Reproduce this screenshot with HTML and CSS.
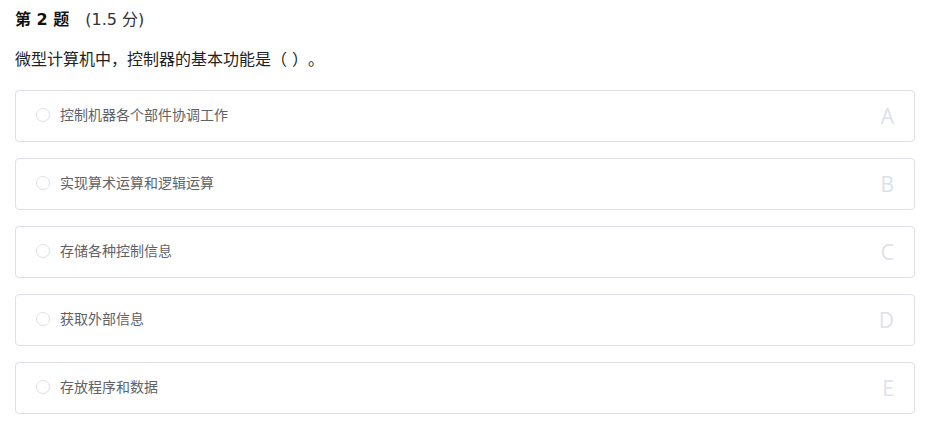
FILE: index.html
```html
<!DOCTYPE html>
<html lang="zh-CN">
<head>
<meta charset="utf-8">
<link rel="stylesheet" href="styles.css">
</head>
<body>
<div class="question">
  <div class="q-title"><span class="q-no">第 2 题</span><span class="q-score">(1.5 分)</span></div>
  <div class="q-text">微型计算机中，控制器的基本功能是（ ）。</div>
  <div class="options">
    <div class="option"><span class="radio"></span><span class="opt-text">控制机器各个部件协调工作</span><span class="letter">A</span></div>
    <div class="option"><span class="radio"></span><span class="opt-text">实现算术运算和逻辑运算</span><span class="letter">B</span></div>
    <div class="option"><span class="radio"></span><span class="opt-text">存储各种控制信息</span><span class="letter">C</span></div>
    <div class="option"><span class="radio"></span><span class="opt-text">获取外部信息</span><span class="letter">D</span></div>
    <div class="option"><span class="radio"></span><span class="opt-text">存放程序和数据</span><span class="letter">E</span></div>
  </div>
</div>
</body>
</html>
```
FILE: styles.css
```css
html, body {
  margin: 0;
  padding: 0;
  background: #fff;
}
body {
  font-family: "DejaVu Sans", "Noto Sans CJK SC", sans-serif;
  color: #1a1a1a;
  text-spacing-trim: space-all;
}
.question {
  padding: 8px 17px 0 15px;
}
.q-title {
  display: flex;
  align-items: baseline;
  gap: 16px;
  font-size: 16px;
  line-height: 24px;
}
.q-no {
  font-weight: bold;
  color: #111;
}
.q-score {
  font-size: 16px;
  color: #333;
}
.q-text {
  margin-top: 16px;
  font-size: 16px;
  line-height: 24px;
  color: #222;
}
.options {
  margin-top: 18px;
  display: flex;
  flex-direction: column;
  gap: 16px;
}
.option {
  height: 50px;
  border: 1px solid #dcdfe6;
  border-radius: 4px;
  display: flex;
  align-items: center;
  padding: 0 20px 0 20px;
}
.radio {
  width: 12px;
  height: 12px;
  border: 1px solid #dcdfe6;
  border-radius: 50%;
  flex: none;
  margin-top: -2px;
}
.opt-text {
  margin-left: 10px;
  font-size: 14px;
  line-height: 20px;
  color: #606266;
  flex: 1;
  margin-top: -3px;
}
.letter {
  font-family: "Open Sans", "Liberation Sans", sans-serif;
  font-size: 21px;
  color: #dde1ea;
}
```
